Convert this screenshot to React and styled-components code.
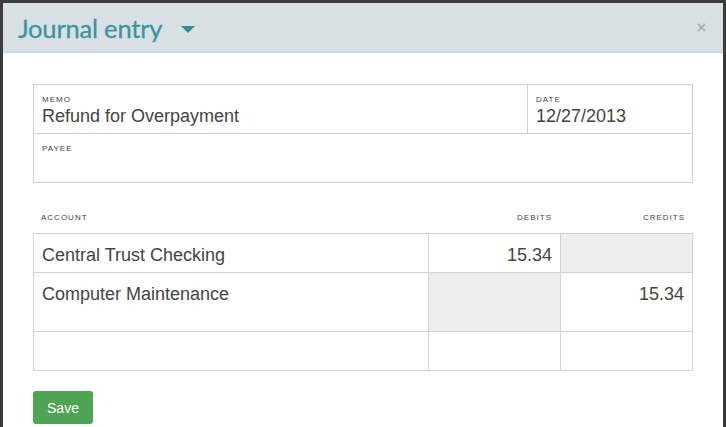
import React from 'react'
import styled, { createGlobalStyle } from 'styled-components'

const GlobalStyle = createGlobalStyle`
  html, body {
    margin: 0;
    padding: 0;
    background: #3b3b3b;
  }
  body {
    padding: 3px 3px 0 3px;
    font-family: "Liberation Sans", Arial, sans-serif;
  }
`

const Modal = styled.div`
  width: 720px;
  height: 424px;
  background: #fff;
  overflow: hidden;
`

const Header = styled.div`
  display: flex;
  align-items: center;
  height: 49px;
  padding: 0 15px;
  background: #d9e0e3;
  border-bottom: 1px solid #ccd4d8;
`

const Title = styled.h2`
  margin: 0;
  font-family: "Lato", sans-serif;
  font-weight: 400;
  font-size: 25.5px;
  color: #3a969e;
  letter-spacing: -0.2px;
  -webkit-text-stroke: 0.3px #3a969e;
`

const Caret = styled.span`
  width: 0;
  height: 0;
  margin-left: 19px;
  margin-top: 3px;
  border-left: 7px solid transparent;
  border-right: 7px solid transparent;
  border-top: 7px solid #2f8e96;
`

const Close = styled.span`
  margin-left: auto;
  margin-right: 2px;
  color: #aab2b5;
  font-size: 16px;
  font-weight: 700;
  line-height: 1;
`

const Body = styled.div`
  padding: 31px 30px 0 30px;
`

const Fields = styled.div`
  display: grid;
  grid-template-columns: 493px 1fr;
  border: 1px solid #cfcfcf;
`

const Field = styled.div`
  height: ${p => (p.$top ? 49 : 48)}px;
  padding: 10px 8px 0;
  box-sizing: border-box;
  grid-column: ${p => (p.$wide ? '1 / span 2' : 'auto')};
  border-left: ${p => (p.$divider ? '1px solid #cfcfcf' : 'none')};
  border-top: ${p => (p.$top ? '1px solid #cfcfcf' : 'none')};
`

const Label = styled.div`
  font-size: 8px;
  letter-spacing: 1px;
  color: #444;
  text-transform: uppercase;
  line-height: 9px;
`

const Value = styled.div`
  margin-top: 2px;
  font-size: 18px;
  color: #444;
`

const ColHeads = styled.div`
  display: grid;
  grid-template-columns: 394px 132px 133px;
  margin-top: 30px;
  padding-bottom: 11px;
`

const ColHead = styled.div`
  font-size: 8px;
  letter-spacing: 1px;
  color: #444;
  padding: 0 ${p => (p.$right ? '7px' : '8px')};
  text-align: ${p => (p.$right ? 'right' : 'left')};
`

const Table = styled.div`
  display: grid;
  grid-template-columns: 394px 132px 1fr;
  border: 1px solid #d3d3d3;
  border-bottom: none;
`

const Cell = styled.div`
  height: ${p => p.$h}px;
  box-sizing: border-box;
  padding: 11px 8px 0;
  font-size: 18px;
  color: #444;
  text-align: ${p => (p.$right ? 'right' : 'left')};
  background: ${p => (p.$shaded ? '#eeeeee' : '#fff')};
  border-bottom: 1px solid #d3d3d3;
  border-left: ${p => (p.$first ? 'none' : '1px solid #d3d3d3')};
`

const SaveButton = styled.button`
  margin-top: 20px;
  width: 60px;
  height: 33px;
  border: none;
  border-radius: 3px;
  background: #4ca454;
  color: #fff;
  font-family: "Liberation Sans", Arial, sans-serif;
  font-size: 14px;
  cursor: pointer;
`

const rows = [
  { account: 'Central Trust Checking', debit: '15.34', credit: '', h: 39, shade: 'credit' },
  { account: 'Computer Maintenance', debit: '', credit: '15.34', h: 59, shade: 'debit' },
  { account: '', debit: '', credit: '', h: 39, shade: null },
]

export default function App() {
  return (
    <>
      <GlobalStyle />
      <Modal>
        <Header>
          <Title>Journal entry</Title>
          <Caret />
          <Close>×</Close>
        </Header>
        <Body>
          <Fields>
            <Field>
              <Label>Memo</Label>
              <Value>Refund for Overpayment</Value>
            </Field>
            <Field $divider>
              <Label>Date</Label>
              <Value>12/27/2013</Value>
            </Field>
            <Field $wide $top>
              <Label>Payee</Label>
            </Field>
          </Fields>
          <ColHeads>
            <ColHead>ACCOUNT</ColHead>
            <ColHead $right>DEBITS</ColHead>
            <ColHead $right>CREDITS</ColHead>
          </ColHeads>
          <Table>
            {rows.map((r, i) => (
              <React.Fragment key={i}>
                <Cell $h={r.h} $first>{r.account}</Cell>
                <Cell $h={r.h} $right $shaded={r.shade === 'debit'}>{r.debit}</Cell>
                <Cell $h={r.h} $right $shaded={r.shade === 'credit'}>{r.credit}</Cell>
              </React.Fragment>
            ))}
          </Table>
          <SaveButton>Save</SaveButton>
        </Body>
      </Modal>
    </>
  )
}
